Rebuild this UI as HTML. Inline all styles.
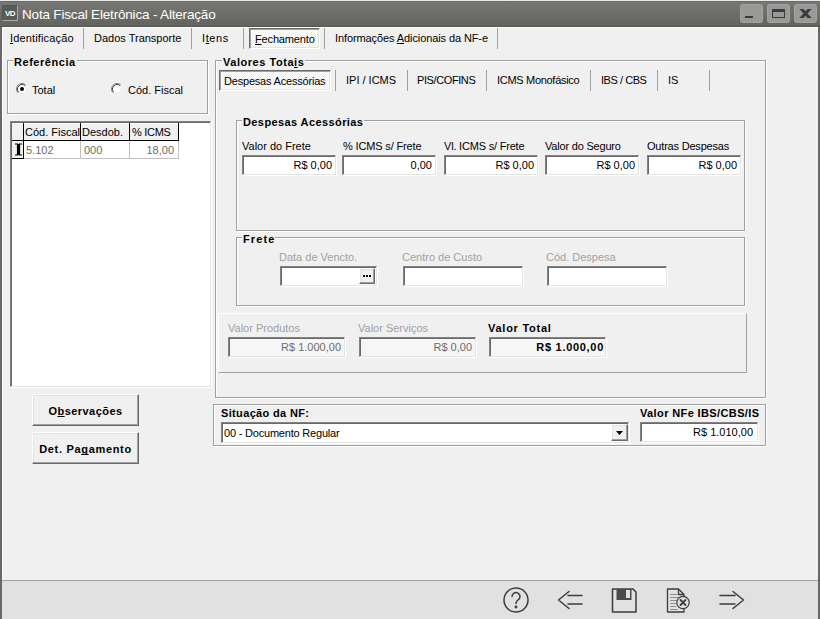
<!DOCTYPE html>
<html lang="pt-BR">
<head>
<meta charset="utf-8">
<title>Nota Fiscal Eletrônica - Alteração</title>
<style>
*{box-sizing:border-box;margin:0;padding:0}
html,body{width:820px;height:619px;overflow:hidden;background:#f0f0f0}
body{position:relative;font-family:"Liberation Sans",sans-serif;font-size:11px;color:#000;line-height:13px}
.abs{position:absolute}
.t{position:absolute;white-space:nowrap;height:13px;line-height:13px}
.b{font-weight:bold;letter-spacing:.45px}
.g{color:#a0a0a0}
u{text-decoration:underline;text-underline-offset:1px;text-decoration-skip-ink:none}
#title{left:0;top:0;width:820px;height:28px;background:linear-gradient(#e9e9e9 0,#e9e9e9 1px,#6a6a6a 1px,#6a6a6a 2px,#777774 2px,#62635e 26px,#555550 26px,#555550 27px,#fff 27px,#fff 28px)}
#title .txt{left:22px;top:5.500px;font-size:13.500px;letter-spacing:-.18px;color:#fff;height:18px;line-height:18px}
#bl{left:0;top:27px;width:2px;height:592px;background:#686866}
#br{left:818px;top:27px;width:2px;height:592px;background:#686866}
.sep{position:absolute;width:1px;background:#a0a0a0;height:21px}
.gb{position:absolute;border:1px solid #a0a0a0;box-shadow:1px 1px 0 #fff, inset 1px 1px 0 #fff}
.gl{position:absolute;background:#f0f0f0;font-weight:bold;letter-spacing:.45px;padding:0 1px;white-space:nowrap;height:13px;line-height:13px}
.in{position:absolute;background:#fff;border:1px solid;border-color:#828282 #e3e3e3 #e3e3e3 #828282;box-shadow:inset 1px 1px 0 #696969, 1px 1px 0 #fff;text-align:right;padding:3px 3px 0 0;height:20px;white-space:nowrap;line-height:13px}
.in.dis{background:#f6f6f6}
.btn{position:absolute;border:1px solid;border-color:#fff #696969 #696969 #fff;box-shadow:inset -1px -1px 0 #a0a0a0, inset 1px 1px 0 #e3e3e3;background:#f0f0f0;font-weight:bold;letter-spacing:.45px;text-align:center}
.seltab{position:absolute;border:1px solid;border-color:#696969 #fff #fff #696969;box-shadow:inset 1px 1px 0 #a0a0a0, inset -1px -1px 0 #e3e3e3;background:repeating-conic-gradient(#fff 0 25%,#f0f0f0 0 50%) 0 0/2px 2px}
</style>
</head>
<body>
<div id="title" class="abs">
  <div class="abs" style="left:2px;top:5px;width:16px;height:16px;background:#5a5a57;border:1px solid;border-color:#555 #aaa #aaa #555;color:#fff;font-size:8px;font-weight:bold;line-height:15px;text-align:center;letter-spacing:-0.6px">VD</div>
  <div class="t txt">Nota Fiscal Eletrônica - Alteração</div>
  <svg class="abs" style="left:740px;top:3px" width="78" height="21" viewBox="0 0 78 21">
    <g fill="#999997" stroke="#a3a3a1" stroke-width="1">
      <rect x="0.500" y="1.500" width="22" height="18" rx="2"/>
      <rect x="27.500" y="1.500" width="22" height="18" rx="2"/>
      <rect x="54.500" y="1.500" width="22" height="18" rx="2"/>
    </g>
    <rect x="5" y="13" width="8" height="2" fill="#3a3a3a"/>
    <rect x="32.500" y="6.500" width="12" height="8" fill="none" stroke="#3a3a3a" stroke-width="1"/>
    <rect x="32" y="6" width="13" height="3" fill="#3a3a3a"/>
    <clipPath id="cx"><rect x="59" y="6" width="13" height="9"/></clipPath>
    <path clip-path="url(#cx)" d="M60 4.500 L71 16.500 M71 4.500 L60 16.500" stroke="#3a3a3a" stroke-width="3" fill="none"/>
  </svg>
</div>
<div id="bl" class="abs"></div>
<div class="abs" style="left:2px;top:28px;width:1px;height:552px;background:#fff"></div>
<div id="br" class="abs"></div>

<!-- main tabs -->
<div class="t" style="left:10px;top:32px;letter-spacing:.15px"><u>I</u>dentificação</div>
<div class="sep" style="left:83px;top:28px"></div>
<div class="t" style="left:94px;top:32px">Dados Transporte</div>
<div class="sep" style="left:191px;top:28px"></div>
<div class="t" style="left:202px;top:32px;letter-spacing:.6px">I<u>t</u>ens</div>
<div class="sep" style="left:243px;top:28px"></div>
<div class="seltab" style="left:249px;top:28px;width:71px;height:21px"></div>
<div class="t" style="left:255px;top:33px;letter-spacing:-.15px"><u>F</u>echamento</div>
<div class="sep" style="left:324px;top:28px"></div>
<div class="t" style="left:335px;top:32px;letter-spacing:-.1px">Informações <u>A</u>dicionais da NF-e</div>
<div class="sep" style="left:497px;top:28px"></div>

<!-- Referência -->
<div class="gb" style="left:7px;top:60px;width:201px;height:54px"></div>
<div class="gl" style="left:13px;top:56px;letter-spacing:.55px">Referência</div>
<svg class="abs" style="left:16px;top:83px" width="12" height="12" viewBox="0 0 12 12"><circle cx="6" cy="6" r="5.500" fill="#fff"/><path d="M2.110 9.890A5.500 5.500 0 0 1 9.890 2.110" fill="none" stroke="#808080"/><path d="M9.890 2.110A5.500 5.500 0 0 1 2.110 9.890" fill="none" stroke="#f8f8f8"/><path d="M2.820 9.180A4.500 4.500 0 0 1 9.180 2.820" fill="none" stroke="#404040"/><path d="M9.180 2.820A4.500 4.500 0 0 1 2.820 9.180" fill="none" stroke="#e3e3e3"/><circle cx="6" cy="6" r="2" fill="#000"/></svg>
<div class="t" style="left:32px;top:84px">Total</div>
<svg class="abs" style="left:111px;top:83px" width="12" height="12" viewBox="0 0 12 12"><circle cx="6" cy="6" r="5.500" fill="#fff"/><path d="M2.110 9.890A5.500 5.500 0 0 1 9.890 2.110" fill="none" stroke="#808080"/><path d="M9.890 2.110A5.500 5.500 0 0 1 2.110 9.890" fill="none" stroke="#f8f8f8"/><path d="M2.820 9.180A4.500 4.500 0 0 1 9.180 2.820" fill="none" stroke="#404040"/><path d="M9.180 2.820A4.500 4.500 0 0 1 2.820 9.180" fill="none" stroke="#e3e3e3"/></svg>
<div class="t" style="left:128px;top:84px">Cód. Fiscal</div>

<!-- grid -->
<div class="abs" style="left:10px;top:121px;width:201px;height:266px;background:#fff;border:1px solid;border-color:#828282 #e3e3e3 #e3e3e3 #828282;box-shadow:inset 1px 1px 0 #696969, 1px 1px 0 #fff"></div>
<div class="abs" style="left:12px;top:123px;width:167px;height:18px;background:#f0f0f0;border-bottom:1px solid #000;box-shadow:inset 0 1px 0 #fff"></div>
<div class="abs" style="left:23px;top:123px;width:1px;height:36px;background:#000"></div>
<div class="abs" style="left:80px;top:123px;width:1px;height:18px;background:#000"></div>
<div class="abs" style="left:129px;top:123px;width:1px;height:18px;background:#000"></div>
<div class="abs" style="left:178px;top:123px;width:1px;height:18px;background:#000"></div>
<div class="abs" style="left:12px;top:141px;width:11px;height:18px;background:#f0f0f0;border-bottom:1px solid #000"></div>
<div class="abs" style="left:24px;top:158px;width:155px;height:1px;background:#c0c0c0"></div>
<div class="abs" style="left:80px;top:141px;width:1px;height:18px;background:#c0c0c0"></div>
<div class="abs" style="left:129px;top:141px;width:1px;height:18px;background:#c0c0c0"></div>
<div class="abs" style="left:178px;top:141px;width:1px;height:18px;background:#c0c0c0"></div>
<div class="t" style="left:25px;top:126px">Cód. Fiscal</div>
<div class="t" style="left:82px;top:126px">Desdob.</div>
<div class="t" style="left:132px;top:126px;letter-spacing:-.3px">% ICMS</div>
<svg class="abs" style="left:14px;top:143px" width="9" height="13" viewBox="0 0 9 13"><path d="M1 1H3.500V12H1 M8 1H5.500V12H8" fill="none" stroke="#000" stroke-width="1.200"/><rect x="3.500" y="1" width="2" height="11" fill="#000"/></svg>
<div class="t" style="left:26px;top:144px;color:#6d6d6d">5.102</div>
<div class="t" style="left:84px;top:144px;color:#6d6d6d">000</div>
<div class="t" style="left:130px;top:144px;width:44px;text-align:right;color:#6d6d6d">18,00</div>

<!-- buttons -->
<div class="btn" style="left:32px;top:394px;width:107px;height:32px;line-height:30px;padding-top:1px">O<u>b</u>servações</div>
<div class="btn" style="left:32px;top:432px;width:107px;height:32px;line-height:30px;padding-top:1px;letter-spacing:.68px">Det. Pa<u>g</u>amento</div>

<!-- Valores Totais -->
<div class="gb" style="left:215px;top:60px;width:551px;height:338px"></div>
<div class="gl" style="left:222px;top:56px;letter-spacing:.54px">Valores Tota<u>i</u>s</div>
<div class="seltab" style="left:219px;top:70px;width:112px;height:21px"></div>
<div class="t" style="left:224px;top:75px;letter-spacing:-.2px">Despesas Acessórias</div>
<div class="sep" style="left:335px;top:70px"></div>
<div class="t" style="left:346px;top:74px">IPI / ICMS</div>
<div class="sep" style="left:407px;top:70px"></div>
<div class="t" style="left:417px;top:74px;letter-spacing:-.4px">PIS/COFINS</div>
<div class="sep" style="left:486px;top:70px"></div>
<div class="t" style="left:497px;top:74px;letter-spacing:-.3px">ICMS Monofásico</div>
<div class="sep" style="left:590px;top:70px"></div>
<div class="t" style="left:601px;top:74px;letter-spacing:-.45px">IBS / CBS</div>
<div class="sep" style="left:657px;top:70px"></div>
<div class="t" style="left:668px;top:74px">IS</div>
<div class="sep" style="left:709px;top:70px"></div>

<!-- Despesas Acessórias -->
<div class="gb" style="left:236px;top:120px;width:509px;height:111px"></div>
<div class="gl" style="left:242px;top:116px;letter-spacing:.4px">Despesas Acessórias</div>
<div class="t" style="left:242px;top:140px">Valor do Frete</div>
<div class="t" style="left:343px;top:140px;letter-spacing:-.15px">% ICMS s/ Frete</div>
<div class="t" style="left:444px;top:140px;letter-spacing:-.2px">Vl. ICMS s/ Frete</div>
<div class="t" style="left:545px;top:140px;letter-spacing:-.2px">Valor do Seguro</div>
<div class="t" style="left:647px;top:140px;letter-spacing:-.2px">Outras Despesas</div>
<div class="in" style="left:242px;top:155px;width:94px">R$ 0,00</div>
<div class="in" style="left:342px;top:155px;width:94px">0,00</div>
<div class="in" style="left:444px;top:155px;width:94px">R$ 0,00</div>
<div class="in" style="left:545px;top:155px;width:94px">R$ 0,00</div>
<div class="in" style="left:647px;top:155px;width:94px">R$ 0,00</div>

<!-- Frete -->
<div class="gb" style="left:236px;top:237px;width:509px;height:69px"></div>
<div class="gl" style="left:242px;top:233px;letter-spacing:1.1px;padding-right:0">Frete</div>
<div class="t g" style="left:279px;top:251px">Data de Vencto.</div>
<div class="t g" style="left:402px;top:251px">Centro de Custo</div>
<div class="t g" style="left:546px;top:251px">Cód. Despesa</div>
<div class="in" style="left:280px;top:266px;width:97px"></div>
<div class="btn" style="left:359px;top:268px;width:16px;height:16px"></div>
<div class="abs" style="left:363px;top:275px;width:8px;height:2px;background:linear-gradient(90deg,#000 0,#000 2px,transparent 2px,transparent 3px,#000 3px,#000 5px,transparent 5px,transparent 6px,#000 6px,#000 8px)"></div>
<div class="in" style="left:403px;top:266px;width:120px"></div>
<div class="in" style="left:547px;top:266px;width:120px"></div>

<!-- totals panel -->
<div class="abs" style="left:218px;top:313px;width:529px;height:60px;border:1px solid;border-color:#fff #a0a0a0 #a0a0a0 #fff"></div>
<div class="t g" style="left:228px;top:322px">Valor Produtos</div>
<div class="t g" style="left:358px;top:322px">Valor Serviços</div>
<div class="t b" style="left:488px;top:322px;letter-spacing:.75px">Valor Total</div>
<div class="in dis" style="left:228px;top:337px;width:117px;color:#6d6d6d">R$ 1.000,00</div>
<div class="in dis" style="left:359px;top:337px;width:117px;color:#6d6d6d">R$ 0,00</div>
<div class="in dis b" style="left:489px;top:337px;width:117px;letter-spacing:.7px;padding-right:1px">R$ 1.000,00</div>

<!-- Situação -->
<div class="gb" style="left:213px;top:404px;width:553px;height:42px"></div>
<div class="t b" style="left:221px;top:407px;letter-spacing:.35px">Situação da NF:</div>
<div class="in" style="left:221px;top:422px;width:408px;height:21px;text-align:left;padding:4px 0 0 2px;letter-spacing:-.2px">00 - Documento Regular</div>
<div class="btn" style="left:611px;top:424px;width:17px;height:17px"></div>
<svg class="abs" style="left:616px;top:431px" width="8" height="5" viewBox="0 0 8 5"><path d="M0 0H7L3.500 4Z" fill="#000"/></svg>
<div class="t b" style="left:640px;top:407px;letter-spacing:.38px">Valor NFe IBS/CBS/IS</div>
<div class="in" style="left:640px;top:422px;width:118px;padding-right:4px">R$ 1.010,00</div>

<!-- bottom bar -->
<div class="abs" style="left:2px;top:580px;width:816px;height:39px;background:#e1e1e1;border-top:1px solid #a0a0a0"></div>
<svg class="abs" style="left:490px;top:581px" width="270" height="38" viewBox="0 0 270 38" fill="none" stroke="#3c3c3c" stroke-width="1.500" stroke-linecap="round" stroke-linejoin="round">
  <circle cx="26" cy="19" r="12"/>
  <path d="M22 15.500 a4 4 0 1 1 6 3.500 c-1.500 1 -2 1.800 -2 3.500"/>
  <circle cx="26" cy="26" r="0.700" fill="#3c3c3c"/>
  <path d="M92 14.500H78 M92 23H78 M79 10.500L68.500 19L79 27.500"/>
  <path d="M122.500 8H143L146 11V31H122.500Z"/>
  <path d="M126.500 8H141.500V19H126.500Z" fill="#4a4a4a" stroke="none"/>
  <path d="M136 9H140V17H136Z" fill="#e1e1e1" stroke="none"/>
  <path d="M177.500 8H188.500L194 13.500V31H177.500Z M188.500 8V13.500H194" stroke-width="1.300"/>
  <path d="M180.500 13.500H187 M180.500 16.500H190 M180.500 19.500H188 M180.500 22.500H186 M180.500 25.500H186 M180.500 28.500H187" stroke-width="0.800" stroke="#777"/>
  <circle cx="193" cy="21.500" r="6.200" fill="#e1e1e1" stroke-width="1.200"/>
  <path d="M190.500 19L195.500 24 M195.500 19L190.500 24" stroke-width="1.800"/>
  <path d="M230 14.500H245 M230 23H245 M243 10.500L253.500 19L243 27.500"/>
</svg>
</body>
</html>
